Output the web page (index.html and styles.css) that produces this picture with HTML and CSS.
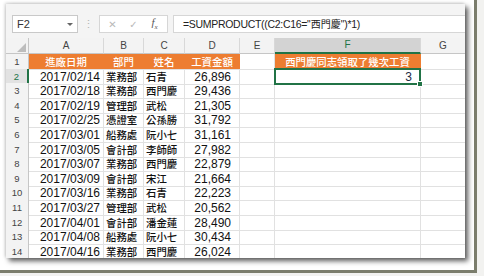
FILE: index.html
```html
<!DOCTYPE html>
<html lang="zh-Hant">
<head>
<meta charset="utf-8">
<title>SUMPRODUCT</title>
<link rel="stylesheet" href="styles.css">
</head>
<body>
<div class="frame">
  <div class="window">
    <div class="toolbar">
      <div class="namebox"><span class="nb-text">F2</span><span class="nb-arrow"></span></div>
      <div class="dots">⋮</div>
      <div class="fxbox">
        <span class="fx-btn">✕</span>
        <span class="fx-btn">✓</span>
        <span class="fx-btn fx">f<sub>x</sub></span>
      </div>
      <div class="formula">=SUMPRODUCT((C2:C16=<span class="cjk">"西門慶"</span>)*1)</div>
    </div>
    <div class="sheet">
      <div class="row hdr">
        <div class="corner"><span class="tri"></span></div>
        <div class="ch">A</div><div class="ch">B</div><div class="ch">C</div><div class="ch">D</div><div class="ch">E</div><div class="ch sel">F</div><div class="ch">G</div>
      </div>
      <div class="row h15">
        <div class="rh">1</div>
        <div class="c th">進廠日期</div><div class="c th">部門</div><div class="c th">姓名</div><div class="c th">工資金額</div><div class="c"></div><div class="c th">西門慶同志領取了幾次工資</div><div class="c"></div>
      </div>
      <div class="row h14">
        <div class="rh act">2</div>
        <div class="c n">2017/02/14</div><div class="c t">業務部</div><div class="c t">石青</div><div class="c m">26,896</div><div class="c"></div><div class="c v active">3</div><div class="c"></div>
      </div>
      <div class="row h15">
        <div class="rh">3</div>
        <div class="c n">2017/02/18</div><div class="c t">業務部</div><div class="c t">西門慶</div><div class="c m">29,436</div><div class="c"></div><div class="c"></div><div class="c"></div>
      </div>
      <div class="row h14">
        <div class="rh">4</div>
        <div class="c n">2017/02/19</div><div class="c t">管理部</div><div class="c t">武松</div><div class="c m">21,305</div><div class="c"></div><div class="c"></div><div class="c"></div>
      </div>
      <div class="row h15">
        <div class="rh">5</div>
        <div class="c n">2017/02/25</div><div class="c t">憑證室</div><div class="c t">公孫勝</div><div class="c m">31,792</div><div class="c"></div><div class="c"></div><div class="c"></div>
      </div>
      <div class="row h15">
        <div class="rh">6</div>
        <div class="c n">2017/03/01</div><div class="c t">船務處</div><div class="c t">阮小七</div><div class="c m">31,161</div><div class="c"></div><div class="c"></div><div class="c"></div>
      </div>
      <div class="row h14">
        <div class="rh">7</div>
        <div class="c n">2017/03/05</div><div class="c t">會計部</div><div class="c t">李師師</div><div class="c m">27,982</div><div class="c"></div><div class="c"></div><div class="c"></div>
      </div>
      <div class="row h15">
        <div class="rh">8</div>
        <div class="c n">2017/03/07</div><div class="c t">業務部</div><div class="c t">西門慶</div><div class="c m">22,879</div><div class="c"></div><div class="c"></div><div class="c"></div>
      </div>
      <div class="row h14">
        <div class="rh">9</div>
        <div class="c n">2017/03/09</div><div class="c t">會計部</div><div class="c t">宋江</div><div class="c m">21,664</div><div class="c"></div><div class="c"></div><div class="c"></div>
      </div>
      <div class="row h15">
        <div class="rh">10</div>
        <div class="c n">2017/03/16</div><div class="c t">業務部</div><div class="c t">石青</div><div class="c m">22,223</div><div class="c"></div><div class="c"></div><div class="c"></div>
      </div>
      <div class="row h15">
        <div class="rh">11</div>
        <div class="c n">2017/03/27</div><div class="c t">管理部</div><div class="c t">武松</div><div class="c m">20,562</div><div class="c"></div><div class="c"></div><div class="c"></div>
      </div>
      <div class="row h14">
        <div class="rh">12</div>
        <div class="c n">2017/04/01</div><div class="c t">會計部</div><div class="c t">潘金蓮</div><div class="c m">28,490</div><div class="c"></div><div class="c"></div><div class="c"></div>
      </div>
      <div class="row h15">
        <div class="rh">13</div>
        <div class="c n">2017/04/08</div><div class="c t">船務處</div><div class="c t">阮小七</div><div class="c m">30,434</div><div class="c"></div><div class="c"></div><div class="c"></div>
      </div>
      <div class="row h14">
        <div class="rh">14</div>
        <div class="c n">2017/04/16</div><div class="c t">業務部</div><div class="c t">西門慶</div><div class="c m">26,024</div><div class="c"></div><div class="c"></div><div class="c"></div>
      </div>
    </div>
  </div>
</div>
</body>
</html>
```

FILE: styles.css
```css
html, body {
  margin: 0;
  padding: 0;
  background: #f2f2f0;
}
body {
  font-family: "Liberation Sans", "Noto Sans CJK TC", sans-serif;
  color: #111;
}
.frame {
  width: 477px;
  height: 273px;
  box-sizing: border-box;
  padding: 4px 0 0 6px;
  background: #ffffff;
  border-right: 3px solid #7b7d6c;
  border-bottom: 3px solid #7b7d6c;
}
.window {
  width: 459px;
  height: 254px;
  overflow: hidden;
  background: #fff;
  box-shadow: 3px 3px 5px rgba(0,0,0,0.65), -1px -1px 3px rgba(0,0,0,0.18);
}
.toolbar {
  height: 34px;
  box-sizing: border-box;
  padding-top: 11px;
  padding-left: 6px;
  background: #f4f4f4;
  display: flex;
  align-items: flex-start;
}
.namebox {
  width: 66px;
  height: 18px;
  box-sizing: border-box;
  border: 1px solid #c9c9c9;
  background: #fff;
  display: flex;
  align-items: center;
  justify-content: space-between;
  padding: 0 4px 0 4px;
  font-size: 11px;
  color: #333;
}
.nb-arrow {
  width: 0;
  height: 0;
  border-left: 3px solid transparent;
  border-right: 3px solid transparent;
  border-top: 3px solid #666;
}
.dots {
  width: 21px;
  text-align: center;
  color: #b5b5b5;
  font-size: 11px;
  line-height: 18px;
}
.fxbox {
  width: 69px;
  height: 18px;
  box-sizing: border-box;
  border: 1px solid #d6d6d6;
  background: #fff;
  display: flex;
  align-items: center;
  justify-content: space-around;
  padding: 0 2px;
}
.fx-btn {
  font-family: "DejaVu Sans", sans-serif;
  font-size: 10px;
  color: #b9b9b9;
  width: 20px;
  text-align: center;
}
.fx {
  font-family: "Liberation Serif", serif;
  font-style: italic;
  color: #555;
  font-size: 11px;
}
.fx sub {
  font-size: 7px;
}
.formula {
  flex: 1;
  margin-left: 5px;
  height: 18px;
  box-sizing: border-box;
  border: 1px solid #d6d6d6;
  border-right: none;
  background: #fff;
  padding-left: 9px;
  font-size: 10.5px;
  letter-spacing: -0.3px;
  line-height: 17px;
  color: #222;
  white-space: nowrap;
}
.formula .cjk {
  font-size: 10px;
  letter-spacing: 0;
}
.sheet {
  display: flex;
  flex-direction: column;
}
.row {
  display: grid;
  grid-template-columns: 23px 75px 40px 41px 55px 35px 146px 45px;
}
.row.hdr { height: 16px; }
.row.h15 { height: 15px; }
.row.h14 { height: 14px; }
.corner {
  background: #f3f3f3;
  border-right: 1px solid #c6c6c6;
  border-bottom: 1px solid #c6c6c6;
  box-sizing: border-box;
  display: flex;
  align-items: flex-end;
  justify-content: flex-end;
  padding: 0 2px 1px 0;
}
.tri {
  width: 0;
  height: 0;
  border-left: 9px solid transparent;
  border-bottom: 9px solid #bdbdbd;
}
.ch {
  background: #f3f3f3;
  border-right: 1px solid #d8d8d8;
  border-bottom: 1px solid #c6c6c6;
  box-sizing: border-box;
  font-size: 10px;
  color: #444;
  text-align: center;
  line-height: 15px;
}
.ch.sel {
  background: #d3d3d3;
  color: #217346;
  border-bottom: 2px solid #217346;
  line-height: 14px;
}
.rh {
  background: #f3f3f3;
  border-right: 1px solid #c6c6c6;
  border-bottom: 1px solid #e0e0e0;
  box-sizing: border-box;
  font-size: 9.5px;
  color: #444;
  text-align: center;
  display: flex;
  align-items: center;
  justify-content: center;
}
.rh.act {
  background: #e2e2e2;
  color: #217346;
  border-right: 2px solid #217346;
}
.c {
  border-right: 1px solid #e1e1e1;
  border-bottom: 1px solid #e1e1e1;
  box-sizing: border-box;
  font-size: 12px;
  white-space: nowrap;
  overflow: visible;
  display: flex;
  align-items: center;
}
.c.th {
  background: #ed7d31;
  border-right-color: #ed7d31;
  color: #fff;
  font-family: "Noto Sans CJK TC", sans-serif;
  font-size: 10.4px;
  font-weight: 500;
  justify-content: center;
}
.c.n {
  justify-content: flex-end;
  padding-right: 3px;
}
.c.t {
  font-family: "Noto Sans CJK TC", sans-serif;
  font-size: 10.4px;
  font-weight: 500;
  padding-left: 2px;
}
.c.m {
  justify-content: flex-end;
  padding-right: 8px;
}
.c.v {
  justify-content: flex-end;
  padding-right: 8px;
  color: #1c2a44;
}
.active {
  position: relative;
}
.active::before {
  content: "";
  position: absolute;
  left: -1px;
  top: -1px;
  right: -1px;
  bottom: -1px;
  border: 2px solid #217346;
}
.active::after {
  content: "";
  position: absolute;
  right: -3px;
  bottom: -3px;
  width: 4px;
  height: 4px;
  background: #217346;
  border: 1px solid #fff;
}
```
